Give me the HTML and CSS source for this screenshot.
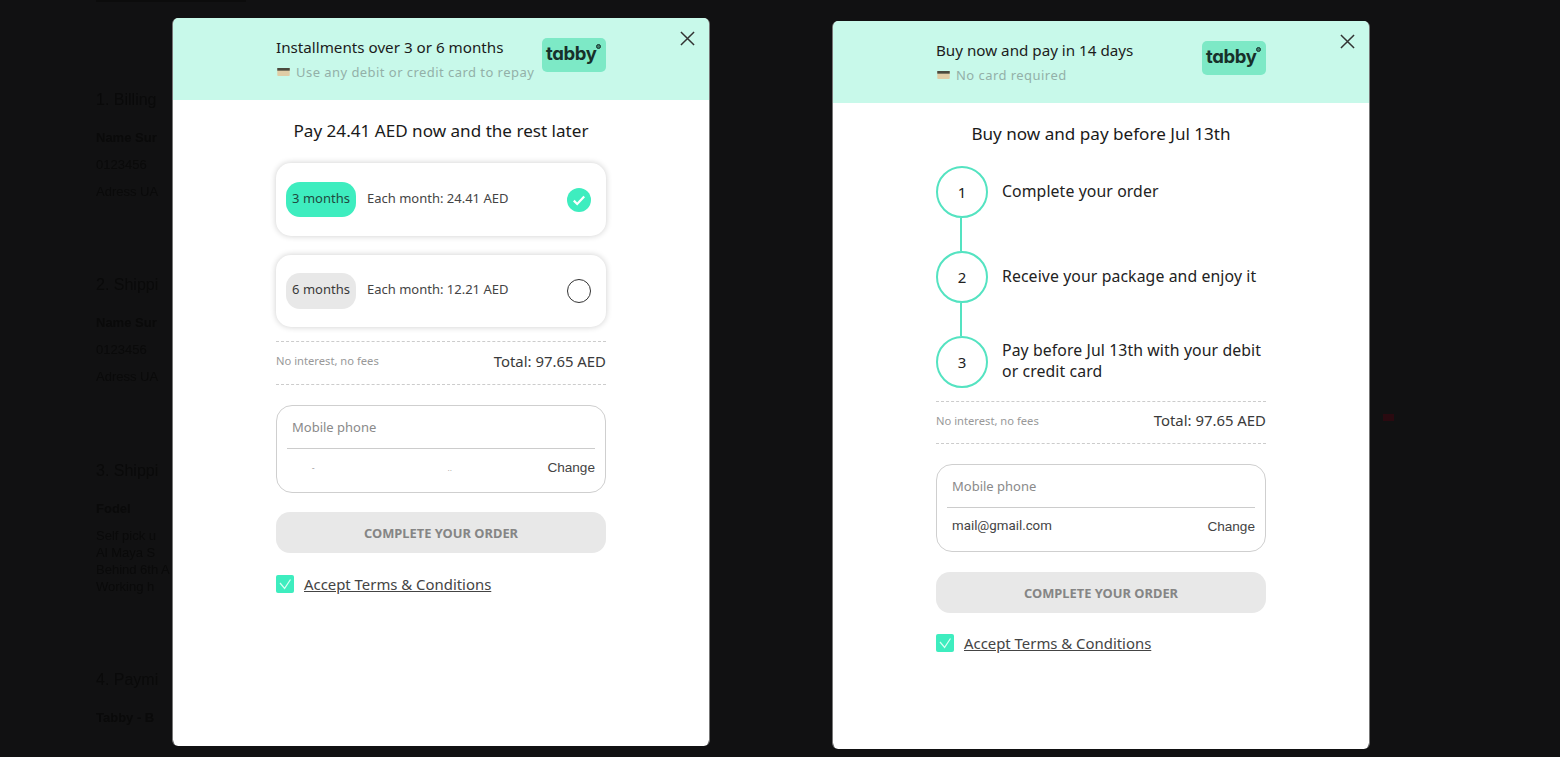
FILE: index.html
```html
<!DOCTYPE html>
<html lang="en">
<head>
<meta charset="utf-8">
<title>tabby checkout</title>
<link rel="stylesheet" href="styles.css">
</head>
<body>
<main class="page">
  <div class="ghost-top"></div>
  <section class="ghost-section ghost-first">
    <h2>1. Billing</h2>
    <p class="ghost-name">Name Sur</p>
    <p>0123456</p>
    <p>Adress UA</p>
  </section>
  <section class="ghost-section ghost-second">
    <h2>2. Shippi</h2>
    <p class="ghost-name">Name Sur</p>
    <p>0123456</p>
    <p>Adress UA</p>
  </section>
  <section class="ghost-section ghost-third">
    <h2>3. Shippi</h2>
    <p class="ghost-name">Fodel</p>
    <div class="ghost-lines">Self pick u<br>Al Maya S<br>Behind 6th A<br>Working h</div>
  </section>
  <section class="ghost-section ghost-fourth">
    <h2>4. Paymi</h2>
    <p class="ghost-name">Tabby - B</p>
  </section>
</main>
<span class="ghost-mark"></span>

<article class="modal modal-a">
  <header class="modal-head">
    <div class="head-copy">
      <div class="head-title">Installments over 3 or 6 months</div>
      <div class="head-sub">
        <svg class="card-icon" viewBox="0 0 14 9" aria-hidden="true"><rect width="14" height="9" rx="1" fill="#e0cda6"/><rect width="14" height="3" fill="#4a4a3e"/></svg>
        Use any debit or credit card to repay
      </div>
    </div>
    <div class="logo"><span>tabby</span><i class="logo-mark"></i></div>
    <svg class="close" viewBox="0 0 16 16" aria-hidden="true"><path d="M1 1l14 14M15 1L1 15"/></svg>
  </header>
  <div class="modal-body">
    <h1 class="body-title">Pay 24.41 AED now and the rest later</h1>
    <div class="plan plan-first">
      <span class="pill pill-on">3 months</span>
      <span class="plan-text">Each month: 24.41 AED</span>
      <svg class="radio" viewBox="0 0 24 24" aria-hidden="true"><circle cx="12" cy="12" r="12" fill="#3eedbf"/><path d="M6.8 12.6l3.4 3.4 7-7.6" fill="none" stroke="#fff" stroke-width="2.2"/></svg>
    </div>
    <div class="plan plan-second">
      <span class="pill">6 months</span>
      <span class="plan-text">Each month: 12.21 AED</span>
      <svg class="radio" viewBox="0 0 24 24" aria-hidden="true"><circle cx="12" cy="12" r="11.5" fill="none" stroke="#333"/></svg>
    </div>
    <div class="total total-a"><span class="note">No interest, no fees</span><span class="sum">Total: 97.65 AED</span></div>
    <div class="field">
      <div class="field-label">Mobile phone</div>
      <div class="field-row"><span class="field-value field-masked"><b>-</b><b>..</b></span><span class="change">Change</span></div>
    </div>
    <button class="submit" type="button">COMPLETE YOUR ORDER</button>
    <div class="terms">
      <svg class="tick" viewBox="0 0 18 18" aria-hidden="true"><rect width="18" height="18" rx="2" fill="#3eedbf"/><path d="M4 8l4.6 5.4L14.5 4.5" fill="none" stroke="#d8fff2" stroke-width="1.2"/></svg>
      <a href="#">Accept Terms &amp; Conditions</a>
    </div>
  </div>
</article>

<article class="modal modal-b">
  <header class="modal-head">
    <div class="head-copy">
      <div class="head-title">Buy now and pay in 14 days</div>
      <div class="head-sub">
        <svg class="card-icon" viewBox="0 0 14 9" aria-hidden="true"><rect width="14" height="9" rx="1" fill="#e0cda6"/><rect width="14" height="3" fill="#4a4a3e"/></svg>
        No card required
      </div>
    </div>
    <div class="logo"><span>tabby</span><i class="logo-mark"></i></div>
    <svg class="close" viewBox="0 0 16 16" aria-hidden="true"><path d="M1 1l14 14M15 1L1 15"/></svg>
  </header>
  <div class="modal-body">
    <h1 class="body-title">Buy now and pay before Jul 13th</h1>
    <ol class="steps">
      <li class="step"><span class="step-num">1</span><span class="step-text">Complete your order</span></li>
      <li class="step-line"></li>
      <li class="step"><span class="step-num">2</span><span class="step-text">Receive your package and enjoy it</span></li>
      <li class="step-line"></li>
      <li class="step"><span class="step-num">3</span><span class="step-text">Pay before Jul 13th with your debit or credit card</span></li>
    </ol>
    <div class="total total-b"><span class="note">No interest, no fees</span><span class="sum">Total: 97.65 AED</span></div>
    <div class="field">
      <div class="field-label">Mobile phone</div>
      <div class="field-row"><span class="field-value">mail@gmail.com</span><span class="change">Change</span></div>
    </div>
    <button class="submit" type="button">COMPLETE YOUR ORDER</button>
    <div class="terms">
      <svg class="tick" viewBox="0 0 18 18" aria-hidden="true"><rect width="18" height="18" rx="2" fill="#3eedbf"/><path d="M4 8l4.6 5.4L14.5 4.5" fill="none" stroke="#d8fff2" stroke-width="1.2"/></svg>
      <a href="#">Accept Terms &amp; Conditions</a>
    </div>
  </div>
</article>
</body>
</html>
```
FILE: styles.css
```css
* { box-sizing: border-box; }

html, body {
  margin: 0;
  height: 100%;
  overflow: hidden;
  background: #111112;
}

body {
  position: relative;
  font-family: "Noto Sans", "Open Sans", sans-serif;
  color: #1a1a1a;
}

/* Dimmed checkout page behind the modals */
.page {
  padding-left: 96px;
  color: #0a0a0a;
  font-family: "Liberation Sans", Arial, sans-serif;
  font-size: 13px;
  line-height: 17px;
  white-space: nowrap;
  filter: blur(0.5px);
}

.ghost-top {
  width: 150px;
  height: 2px;
  background: #0c0c0c;
}

.ghost-section h2 {
  margin: 0 0 19px;
  font-size: 16px;
  font-weight: 400;
  line-height: 20px;
}

.ghost-section p { margin: 0 0 10px; }

.ghost-section .ghost-name { font-weight: 700; }

.ghost-first { margin-top: 88px; }
.ghost-second { margin-top: 75px; }
.ghost-third { margin-top: 76px; }
.ghost-fourth { margin-top: 75px; }

.ghost-mark {
  position: absolute;
  left: 1383px;
  top: 414px;
  width: 11px;
  height: 7px;
  background: #2a0a10;
}

/* Modals */
.modal {
  position: absolute;
  width: 538px;
  height: 728px;
  background: #fff;
  background-clip: padding-box;
  border-left: 1px solid #777;
  border-right: 1px solid #777;
  border-radius: 6px;
  overflow: hidden;
}

.modal-a { left: 172px; top: 18px; }
.modal-b { left: 832px; top: 21px; }

.modal-head {
  position: relative;
  display: flex;
  height: 82px;
  padding: 19px 0 0 103px;
  background: #c8f9ea;
}

.head-copy { width: 266px; }

.head-title {
  font-size: 15.2px;
  line-height: 20px;
  color: #1c1c1c;
  white-space: nowrap;
}

.head-sub {
  display: flex;
  align-items: center;
  gap: 5px;
  margin-top: 5px;
  font-size: 13px;
  line-height: 20px;
  letter-spacing: 0.45px;
  color: #93b0a8;
  white-space: nowrap;
}

.card-icon { width: 15px; height: 8px; }

.logo {
  position: relative;
  width: 64px;
  height: 34px;
  margin-top: 1px;
  padding: 3px 0 0 4px;
  background: #7de9c6;
  border-radius: 5px;
  font-family: Inter, "Liberation Sans", sans-serif;
  font-size: 18.5px;
  font-weight: 700;
  font-feature-settings: "cv11";
  line-height: 24px;
  letter-spacing: -0.4px;
  color: #17302a;
}

.logo-mark {
  position: absolute;
  left: 54px;
  top: 6px;
  width: 5px;
  height: 5px;
  border: 1.5px solid #17302a;
  border-radius: 50%;
  background: #3f7f6c;
}

.close {
  position: absolute;
  right: 14px;
  top: 13px;
  width: 15px;
  height: 15px;
  fill: none;
  stroke: #333;
  stroke-width: 1.6;
}

.modal-body { padding: 0 103px; }

.body-title {
  margin: 19px 0 0;
  font-size: 17.1px;
  font-weight: 400;
  line-height: 24px;
  text-align: center;
  color: #1a1a1a;
}

/* Plan cards */
.plan {
  display: flex;
  align-items: flex-start;
  height: 73px;
  margin-top: 19px;
  padding: 19px 15px 0 10px;
  background: #fff;
  border-radius: 15px;
  box-shadow: 0 0 6px rgba(0, 0, 0, 0.2);
}

.plan-first { margin-top: 20px; }
.plan-second { height: 72px; padding-top: 18px; }
.plan-second .pill { height: 36px; }

.pill {
  flex: none;
  width: 70px;
  height: 35px;
  border-radius: 14px;
  background: #e8e8e8;
  font-size: 13px;
  line-height: 33px;
  text-align: center;
  color: #3a3a3a;
}

.pill-on { background: #3eedbf; color: #1f4a40; }

.plan-text {
  flex: 1;
  padding-left: 11px;
  font-size: 13px;
  line-height: 33px;
  color: #444;
}

.radio { flex: none; width: 24px; height: 24px; margin-top: 6px; }

/* Totals */
.total {
  display: flex;
  justify-content: space-between;
  align-items: center;
  padding-bottom: 5px;
  border-top: 1px dashed #ccc;
  border-bottom: 1px dashed #ccc;
}

.total-a { height: 44px; margin-top: 14px; }
.total-b { height: 43px; margin-top: 13px; }

.note { font-size: 11.2px; color: #999; }
.sum { font-size: 14.9px; color: #3a3a3a; }

/* Contact field */
.field {
  height: 88px;
  margin-top: 20px;
  padding: 0 10px;
  border: 1px solid #cfcfcf;
  border-radius: 16px;
}

.field-label {
  height: 43px;
  padding: 11px 5px 0;
  font-size: 13px;
  line-height: 20px;
  color: #8a8a8a;
  border-bottom: 1px solid #ccc;
}

.field-row {
  display: flex;
  justify-content: space-between;
  align-items: flex-start;
  padding-left: 5px;
}

.field-value {
  font-family: Roboto, "Liberation Sans", sans-serif;
  font-size: 13.3px;
  line-height: 20px;
  margin-top: 8px;
  color: #444;
}

.field-masked {
  display: flex;
  gap: 133px;
  padding: 5px 0 0 20px;
  font-size: 9px;
  line-height: 12px;
  color: #999;
}

.field-masked b { font-weight: 400; }

.change {
  font-family: "Liberation Sans", Arial, sans-serif;
  font-size: 13.6px;
  line-height: 20px;
  margin-top: 9px;
  color: #444;
}

/* Submit */
.submit {
  display: block;
  width: 100%;
  height: 41px;
  margin-top: 20px;
  padding: 0;
  border: 0;
  border-radius: 14px;
  background: #e8e8e8;
  font-family: "Noto Sans", "Open Sans", sans-serif;
  font-size: 12.9px;
  font-weight: 700;
  color: #858585;
}

.modal-a .submit { margin-top: 19px; }

.terms {
  display: flex;
  align-items: center;
  gap: 10px;
  margin-top: 21px;
}

.modal-b .terms { margin-top: 20px; }

.tick { width: 18px; height: 18px; }

.terms a {
  font-size: 14.9px;
  line-height: 20px;
  color: #444;
}

/* Steps */
.steps {
  margin: 20px 0 0;
  padding: 0;
  list-style: none;
}

.step {
  display: flex;
  align-items: center;
  gap: 14px;
}

.step-num {
  flex: none;
  width: 52px;
  height: 52px;
  border: 2px solid #54e3c1;
  border-radius: 50%;
  font-size: 15px;
  line-height: 48px;
  text-align: center;
  color: #222;
}

.step-text {
  padding-bottom: 2px;
  font-size: 15.8px;
  line-height: 21px;
  letter-spacing: 0.1px;
  color: #222;
}

.step-line {
  width: 2px;
  height: 33px;
  margin-left: 24px;
  background: #54e3c1;
}
```
